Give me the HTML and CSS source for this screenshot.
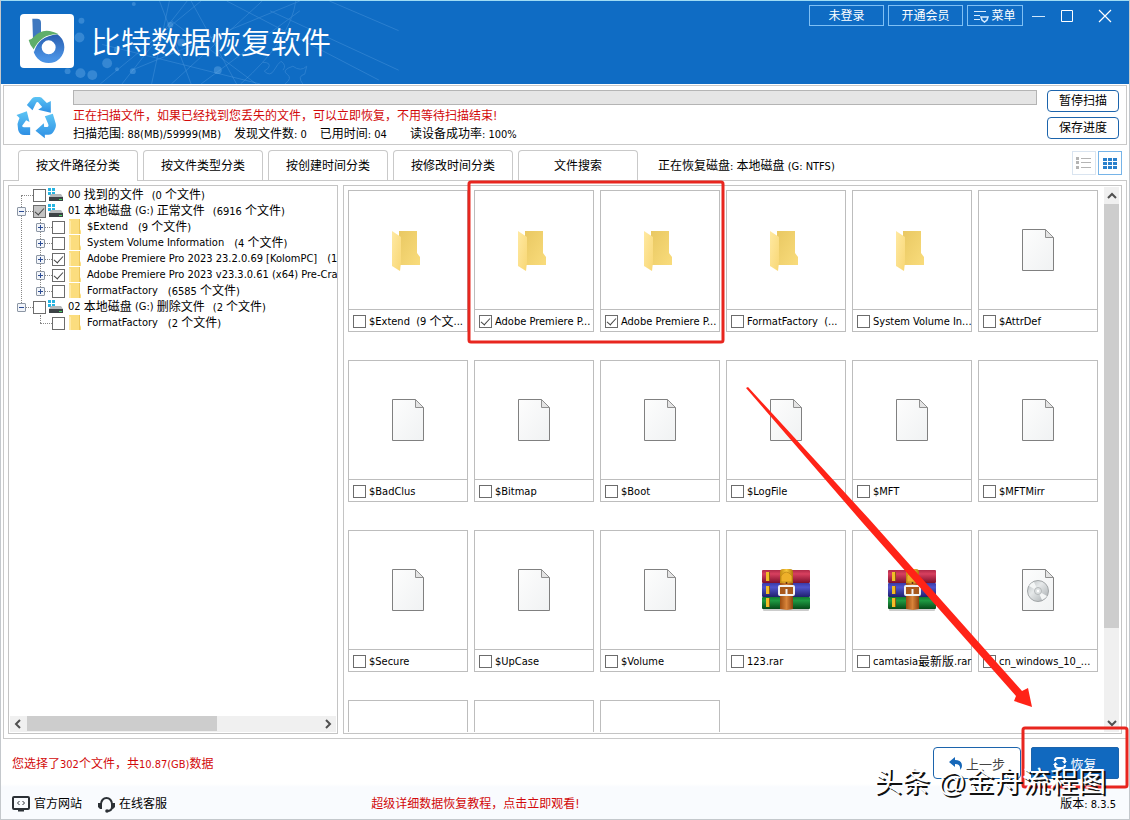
FILE: index.html
```html
<!DOCTYPE html>
<html lang="zh-CN">
<head>
    <meta charset="UTF-8">
    <meta name="viewport" content="width=device-width, initial-scale=1.0">
    <title>比特数据恢复软件</title>
    <link rel="stylesheet" href="styles.css">
</head>
<body>

    <!-- Shared icons -->
    <svg class="icon-defs" aria-hidden="true">
        <defs>
            <linearGradient id="g-back" x1="0" y1="0" x2="1" y2="1"><stop offset="0" stop-color="#e9c862"/><stop offset="1" stop-color="#f9dc7c"/></linearGradient>
            <linearGradient id="g-front" x1="0" y1="0" x2="1" y2="1"><stop offset="0" stop-color="#ffe9a2"/><stop offset="1" stop-color="#f8d775"/></linearGradient>
            <linearGradient id="g-paper" x1="0" y1="0" x2="1" y2="1"><stop offset="0" stop-color="#fdfdfd"/><stop offset="1" stop-color="#f0f2f3"/></linearGradient>
            <linearGradient id="g-red" x1="0" y1="0" x2="0" y2="1"><stop offset="0" stop-color="#b02a48"/><stop offset=".3" stop-color="#d8405f"/><stop offset="1" stop-color="#7e0f2c"/></linearGradient>
            <linearGradient id="g-blue" x1="0" y1="0" x2="0" y2="1"><stop offset="0" stop-color="#3a3aa8"/><stop offset=".3" stop-color="#5054cc"/><stop offset="1" stop-color="#20206e"/></linearGradient>
            <linearGradient id="g-green" x1="0" y1="0" x2="0" y2="1"><stop offset="0" stop-color="#117a30"/><stop offset=".3" stop-color="#1f9a42"/><stop offset="1" stop-color="#064a18"/></linearGradient>
            <linearGradient id="g-belt" x1="0" y1="0" x2="1" y2="0"><stop offset="0" stop-color="#9c4c10"/><stop offset=".5" stop-color="#d8843a"/><stop offset="1" stop-color="#8c420e"/></linearGradient>
            <linearGradient id="g-gold" x1="0" y1="0" x2="1" y2="0"><stop offset="0" stop-color="#c48a10"/><stop offset=".5" stop-color="#f8c83c"/><stop offset="1" stop-color="#b07808"/></linearGradient>
            <linearGradient id="g-disc" x1="0" y1="0" x2="1" y2="1"><stop offset="0" stop-color="#b5babd"/><stop offset=".4" stop-color="#e6e9ea"/><stop offset="1" stop-color="#a4a9ac"/></linearGradient>
            <linearGradient id="g-cycle" x1="0" y1="0" x2="0" y2="1"><stop offset="0" stop-color="#5cc4f4"/><stop offset="1" stop-color="#2e8fe4"/></linearGradient>
            <linearGradient id="g-ring" x1="0" y1="0" x2="0" y2="1"><stop offset="0" stop-color="#2b62b4"/><stop offset="1" stop-color="#4a92e4"/></linearGradient>
        </defs>
        <symbol id="folder" viewBox="0 0 48 48">
            <path d="M15 5h18v22l3 4v8H15z" fill="url(#g-back)"/>
            <path d="M8 5l9 6v25l-1 9-8-5z" fill="url(#g-front)"/>
        </symbol>
        <symbol id="file" viewBox="0 0 48 48">
            <path d="M8.500 3.500h23l8 8v33h-31z" fill="url(#g-paper)" stroke="#808080"/>
            <path d="M31.500 3.500v8h8z" fill="#e4e4e4" stroke="#909090"/>
        </symbol>
        <symbol id="disc" viewBox="0 0 48 48">
            <use href="#file"/>
            <circle cx="24" cy="25" r="10.500" fill="url(#g-disc)" stroke="#a2a6a8"/>
            <path d="M24 25l-9-5a10 10 0 0 1 5-4zM24 25l9 5a10 10 0 0 1-5 4z" fill="#f4f6f6"/>
            <circle cx="24" cy="25" r="3.500" fill="#dfe2e3" stroke="#b4b8ba"/>
            <circle cx="24" cy="25" r="1.200" fill="#fff"/>
        </symbol>
        <symbol id="rar" viewBox="0 0 48 48">
            <rect x="1" y="42" width="46" height="3" rx="1" fill="#ccc"/>
            <rect y="4" width="48" height="13" rx="1" fill="url(#g-red)"/>
            <rect y="17" width="48" height="14" rx="1" fill="url(#g-blue)"/>
            <rect y="31" width="48" height="12" rx="1" fill="url(#g-green)"/>
            <path d="M4 6h3v9H4zM4 20h3v8H4zM4 32h3v9H4z" fill="#f2bd28"/>
            <path d="M7 6h1v9H7zM7 20h1v8H7zM7 32h1v9H7z" fill="#8f5c10"/>
            <path d="M18 17h13v26l-6 1-7-1z" fill="url(#g-belt)"/>
            <path d="M18 17V6q0-3 3-3h7q3 0 3 3v11z" fill="url(#g-gold)"/>
            <path d="M19 10q5-8 11 0v6H19z" fill="#eeb02a" stroke="#b07a10" stroke-width=".6"/>
            <rect x="17" y="20" width="15" height="9" rx="1" fill="#a8581c" stroke="#f1f1f1" stroke-width="2"/>
            <circle cx="24.500" cy="17" r="1" fill="#602c08"/>
            <path d="M24.500 23v5" stroke="#f1f1f1" stroke-width="2"/>
        </symbol>
        <symbol id="drive" viewBox="0 0 15 14">
            <path d="M0 0h3v3H0zM4 0h3v3H4zM0 4h3v3H0zM4 4h3v3H4z" fill="#26b4e2"/>
            <path d="M3 6h10l2 3H1z" fill="#b4b8ba"/>
            <path d="M1 9h14v4H1z" fill="#3c4245"/>
            <path d="M11 11h3v1h-3z" fill="#48d860"/>
        </symbol>
        <symbol id="small-folder" viewBox="0 0 13 16">
            <path d="M0 0h11v10l1 2v3H0z" fill="#fbdd7e"/>
            <path d="M0 1l2 1v13H0z" fill="#ffe9a4"/>
            <path d="M10.500 0v15" stroke="#edc75c" fill="none"/>
        </symbol>
    </svg>

    <!-- Title bar -->
    <header class="title-bar">
        <svg class="title-pattern" viewBox="0 0 400 84" aria-hidden="true">
            <g fill="none" stroke="#5fa4e4" stroke-width="1" opacity=".35">
                <path d="M98 84L200 0M120 84L186 0M150 84L168 0M190 84L158 0M236 84L190 0M256 84L170 20M170 84L262 0M200 84L300 10M130 70L300 0M100 44L260 84M226 0L380 80M330 0L400 30M270 10L400 70M240 84Q290 40 296 0"/>
                <path d="M262 62q10 0 6 6l-4 3q6 6 10-1t7-9q6 4 2 9M285 84q8-6 2-10t6-8q8 6 14 0l-2 8q-8 2-2 10"/>
            </g>
            <g fill="#6eb0ea" opacity=".4">
                <circle cx="79" cy="20" r="3"/><circle cx="77" cy="37" r="5"/><circle cx="105" cy="63" r="5"/><circle cx="78" cy="73" r="5"/><circle cx="90" cy="75" r="5"/><circle cx="65" cy="71" r="3"/><circle cx="115" cy="69" r="2"/><circle cx="131" cy="71" r="3"/><circle cx="132" cy="3" r="2"/><circle cx="169" cy="24" r="3"/><circle cx="180" cy="42" r="4"/><circle cx="217" cy="70" r="4"/><circle cx="115" cy="49" r="3"/>
            </g>
        </svg>
        <svg class="logo" viewBox="60 41 162 162" aria-hidden="true">
            <rect x="60" y="41" width="162" height="162" rx="12" fill="#fff"/>
            <path d="M97 55h14q12 0 12 12v50l-23 30z" fill="#3f78bf"/>
            <circle cx="146" cy="141" r="34" fill="none" stroke="url(#g-ring)" stroke-width="26"/>
            <path d="M100 154Q112 106 172 99" fill="none" stroke="#fff" stroke-width="5"/>
            <path d="M86 119Q94 119 100 111Q130 77 176 102Q126 98 101 147Q90 136 86 119z" fill="#5fae6a"/>
        </svg>
        <h1>比特数据恢复软件</h1>
        <div class="window-tools">
            <button class="title-btn">未登录</button>
            <button class="title-btn">开通会员</button>
            <button class="title-btn menu-btn">
                <svg width="15" height="14" viewBox="0 0 15 14" aria-hidden="true"><path d="M0 2.500h12M0 6.500h6M0 10.500h6" stroke="#d8ecff" fill="none"/><path d="M7 8h7l-1 3-2.500 2-2.500-2z" fill="none" stroke="#d8ecff" stroke-width="1.500"/></svg>菜单</button>
            <button class="win-btn" aria-label="最小化"><svg width="14" height="14"><path d="M0 7.500h13" stroke="#cfe6fb"/></svg></button>
            <button class="win-btn" aria-label="最大化"><svg width="14" height="14"><path d="M1.500 1.500h11v11h-11z" stroke="#fff" fill="none"/></svg></button>
            <button class="win-btn close-btn" aria-label="关闭"><svg width="14" height="14"><path d="M1 1l12 12M13 1L1 13" stroke="#fff" stroke-width="1.200"/></svg></button>
        </div>
    </header>

    <!-- Scan status -->
    <section class="scan-panel">
        <svg class="cycle" viewBox="48 288 122 132" aria-hidden="true">
            <g fill="url(#g-cycle)">
                <path d="M80 315L95 296Q98 291 105 291H118Q124 291 128 297L140 309 152 303V338L114 329 126 321 114 307Q111 304 108 308L97 331z"/>
                <path d="M49 345L80 334 88 366 78 361 66 377Q66 382 72 382H90V405H72Q58 405 54 390L52 372Q54 364 58 354z"/>
                <path d="M134 349L158 341 167 372Q169 382 160 395 155 404 145 404H134V415L106 392 131 370 132 381H141Q147 380 144 372z"/>
            </g>
        </svg>
        <div class="scan-info">
            <div class="progress"></div>
            <p class="scan-note">正在扫描文件，如果已经找到您丢失的文件，可以立即恢复，不用等待扫描结束!</p>
            <p class="scan-stats">
                <span><b>扫描范围</b>: 88(MB)/59999(MB)</span>
                <span><b>发现文件数</b>: 0</span>
                <span><b>已用时间</b>: 04</span>
                <span class="rate"><b>读设备成功率</b>: 100%</span>
            </p>
        </div>
        <div class="scan-buttons">
            <button class="line-btn">暂停扫描</button>
            <button class="line-btn">保存进度</button>
        </div>
    </section>

    <!-- Tabs -->
    <nav class="tabs">
        <button class="tab active">按文件路径分类</button>
        <button class="tab">按文件类型分类</button>
        <button class="tab">按创建时间分类</button>
        <button class="tab">按修改时间分类</button>
        <button class="tab">文件搜索</button>
        <span class="disk"><b>正在恢复磁盘</b>: <b>本地磁盘</b> (G: NTFS)</span>
        <button class="view-btn list-view" aria-label="列表"><svg width="16" height="12"><path d="M0 0h3v3H0zM0 4h3v3H0zM0 9h3v3H0z" fill="#b4b4b4"/><path d="M5 1.500h10M5 5.500h10M5 10.500h10" stroke="#b4b4b4"/></svg></button>
        <button class="view-btn grid-view" aria-label="图标"><svg width="14" height="11"><path d="M0 0h4v3H0zM5 0h4v3H5zM10 0h4v3h-4zM0 4h4v3H0zM5 4h4v3H5zM10 4h4v3h-4zM0 8h4v3H0zM5 8h4v3H5zM10 8h4v3h-4z" fill="#2a80cc"/></svg></button>
    </nav>

    <main class="work-area">
        <!-- Directory tree -->
        <div class="tree-pane">
            <ul class="tree">
                <li>
                    <label class="node leaf"><i class="dots"></i><input type="checkbox"><svg class="drive"><use href="#drive"/></svg>00 <b>找到的文件</b><span class="count">(0 <b>个文件</b>)</span></label>
                </li>
                <li>
                    <label class="node"><i class="toggle"></i><i class="dots"></i><input type="checkbox" class="partial" checked><svg class="drive"><use href="#drive"/></svg>01 <b>本地磁盘</b> (G:) <b>正常文件</b><span class="count">(6916 <b>个文件</b>)</span></label>
                    <ul>
                        <li><label class="node"><i class="toggle plus"></i><i class="dots"></i><input type="checkbox"><svg class="dir"><use href="#small-folder"/></svg>$Extend<span class="count">(9 <b>个文件</b>)</span></label></li>
                        <li><label class="node"><i class="toggle plus"></i><i class="dots"></i><input type="checkbox"><svg class="dir"><use href="#small-folder"/></svg>System Volume Information<span class="count">(4 <b>个文件</b>)</span></label></li>
                        <li><label class="node"><i class="toggle plus"></i><i class="dots"></i><input type="checkbox" checked><svg class="dir"><use href="#small-folder"/></svg>Adobe Premiere Pro 2023 23.2.0.69 [KolomPC]<span class="count">(1</span></label></li>
                        <li><label class="node"><i class="toggle plus"></i><i class="dots"></i><input type="checkbox" checked><svg class="dir"><use href="#small-folder"/></svg>Adobe Premiere Pro 2023 v23.3.0.61 (x64) Pre-Cra</label></li>
                        <li><label class="node"><i class="toggle plus"></i><i class="dots"></i><input type="checkbox"><svg class="dir"><use href="#small-folder"/></svg>FormatFactory<span class="count">(6585 <b>个文件</b>)</span></label></li>
                    </ul>
                </li>
                <li>
                    <label class="node"><i class="toggle"></i><i class="dots"></i><input type="checkbox"><svg class="drive"><use href="#drive"/></svg>02 <b>本地磁盘</b> (G:) <b>删除文件</b><span class="count">(2 <b>个文件</b>)</span></label>
                    <ul>
                        <li><label class="node leaf"><i class="dots"></i><input type="checkbox"><svg class="dir"><use href="#small-folder"/></svg>FormatFactory<span class="count">(2 <b>个文件</b>)</span></label></li>
                    </ul>
                </li>
            </ul>
            <div class="h-scroll">
                <svg width="17" height="16"><path d="M10 4L6 8l4 4" fill="none" stroke="#505050" stroke-width="2"/></svg>
                <div class="h-track"><div class="h-thumb"></div></div>
                <svg width="17" height="16"><path d="M7 4l4 4-4 4" fill="none" stroke="#505050" stroke-width="2"/></svg>
            </div>
        </div>

        <!-- Thumbnails -->
        <div class="list-pane">
            <div class="file-grid">
                <div class="card"><div class="thumb"><svg><use href="#folder"/></svg></div><label><input type="checkbox">$Extend&nbsp; (9 <b>个文</b>...</label></div>
                <div class="card"><div class="thumb"><svg><use href="#folder"/></svg></div><label><input type="checkbox" checked>Adobe Premiere P...</label></div>
                <div class="card"><div class="thumb"><svg><use href="#folder"/></svg></div><label><input type="checkbox" checked>Adobe Premiere P...</label></div>
                <div class="card"><div class="thumb"><svg><use href="#folder"/></svg></div><label><input type="checkbox">FormatFactory&nbsp; (...</label></div>
                <div class="card"><div class="thumb"><svg><use href="#folder"/></svg></div><label><input type="checkbox">System Volume In...</label></div>
                <div class="card"><div class="thumb"><svg><use href="#file"/></svg></div><label><input type="checkbox">$AttrDef</label></div>
                <div class="card"><div class="thumb"><svg><use href="#file"/></svg></div><label><input type="checkbox">$BadClus</label></div>
                <div class="card"><div class="thumb"><svg><use href="#file"/></svg></div><label><input type="checkbox">$Bitmap</label></div>
                <div class="card"><div class="thumb"><svg><use href="#file"/></svg></div><label><input type="checkbox">$Boot</label></div>
                <div class="card"><div class="thumb"><svg><use href="#file"/></svg></div><label><input type="checkbox">$LogFile</label></div>
                <div class="card"><div class="thumb"><svg><use href="#file"/></svg></div><label><input type="checkbox">$MFT</label></div>
                <div class="card"><div class="thumb"><svg><use href="#file"/></svg></div><label><input type="checkbox">$MFTMirr</label></div>
                <div class="card"><div class="thumb"><svg><use href="#file"/></svg></div><label><input type="checkbox">$Secure</label></div>
                <div class="card"><div class="thumb"><svg><use href="#file"/></svg></div><label><input type="checkbox">$UpCase</label></div>
                <div class="card"><div class="thumb"><svg><use href="#file"/></svg></div><label><input type="checkbox">$Volume</label></div>
                <div class="card"><div class="thumb"><svg><use href="#rar"/></svg></div><label><input type="checkbox">123.rar</label></div>
                <div class="card"><div class="thumb"><svg><use href="#rar"/></svg></div><label><input type="checkbox">camtasia<b>最新版</b>.rar</label></div>
                <div class="card"><div class="thumb"><svg><use href="#disc"/></svg></div><label><input type="checkbox">cn_windows_10_...</label></div>
                <div class="card"><div class="thumb"></div></div>
                <div class="card"><div class="thumb"></div></div>
                <div class="card"><div class="thumb"></div></div>
            </div>
            <div class="v-scroll">
                <svg width="15" height="17"><path d="M4 11l4-4 4 4" fill="none" stroke="#505050" stroke-width="2"/></svg>
                <div class="v-track"><div class="v-thumb"></div></div>
                <svg width="15" height="17"><path d="M4 6l4 4 4-4" fill="none" stroke="#505050" stroke-width="2"/></svg>
            </div>
        </div>
    </main>

    <!-- Footer -->
    <footer class="footer">
        <div class="action-row">
            <p class="selected"><b>您选择了</b>302<b>个文件，共</b>10.87(GB)<b>数据</b></p>
            <button class="back-btn"><svg width="14" height="13" viewBox="0 0 14 13"><path d="M6 0v3q7 0 7 6 0 2-2 4 1-6-5-6v3L0 5z" fill="#1667b8"/></svg>上一步</button>
            <button class="recover-btn"><svg width="14" height="14" viewBox="0 0 14 14"><path d="M2 5q0-3 3-3h4q3 0 3 3M12 9q0 3-3 3H5q-3 0-3-3" fill="none" stroke="#fff" stroke-width="2"/><path d="M9 5h5l-2.500 3zM0 9h5L2.500 6z" fill="#fff"/></svg>恢复</button>
        </div>
        <div class="link-row">
            <a href="#"><svg width="18" height="16" viewBox="0 0 18 16"><rect x="1" y="1" width="16" height="12" rx="1" fill="none" stroke="#2c3136" stroke-width="2"/><path d="M7.500 5L5.500 7l2 2M10.500 5l2 2-2 2" fill="none" stroke="#2c3136"/><path d="M6 13h6v2.500H6z" fill="#2c3136"/></svg>官方网站</a>
            <a href="#"><svg width="17" height="17" viewBox="0 0 17 17"><path d="M3 11V8a5.500 6 0 0 1 11 0v3q0 4-5 4" fill="none" stroke="#2c3136" stroke-width="2"/><path d="M0 7h4v6H2L0 11zM17 7h-4v6h2l2-2z" fill="#2c3136"/><circle cx="9" cy="15" r="1.800" fill="#2c3136"/></svg>在线客服</a>
            <a href="#" class="guide">超级详细数据恢复教程，点击立即观看!</a>
            <span class="version"><b>版本</b>: 8.3.5</span>
        </div>
    </footer>

    <!-- Guide marks over the window -->
    <svg class="marks" width="1130" height="820" aria-hidden="true">
        <rect x="469" y="182" width="254" height="160" rx="2" fill="none" stroke="#e8261f" stroke-width="3"/>
        <rect x="1023" y="728" width="104" height="59" rx="2" fill="none" stroke="#e8261f" stroke-width="3"/>
        <path d="M746 388L748 387 870 520 1022 691 1028 688 1032 707 1014 701 1016 696 862 522z" fill="#ff2317"/>
    </svg>
    <div class="watermark">头条 @金舟流程图</div>

</body>
</html>
```
FILE: styles.css
```css
/* General Styles */
* {
    box-sizing: border-box;
}

body {
    position: relative;
    margin: 0;
    height: 100vh;
    display: flex;
    flex-direction: column;
    font-family: "DejaVu Sans Condensed", "Noto Sans CJK SC", sans-serif;
    font-size: 11px;
    line-height: 16px;
    color: #000;
    background: #fff;
    border: 1px solid #c4c8cc;
    border-top: 0;
    overflow: hidden;
}

p, h1, ul {
    margin: 0;
    padding: 0;
}

b {
    font-size: 12px;
    font-weight: normal;
}

button {
    padding: 0;
    font-family: inherit;
    font-size: 12px;
    color: #000;
    background: #fff;
}

a {
    color: #000;
    text-decoration: none;
}

input[type="checkbox"] {
    appearance: none;
    flex: none;
    width: 13px;
    height: 13px;
    margin: 0;
    border: 1px solid #6c6c6c;
    background: #fff;
}

input[type="checkbox"]:checked::before {
    content: "";
    display: block;
    width: 8px;
    height: 4px;
    margin: 2px 1px;
    border-left: 1px solid #444;
    border-bottom: 1px solid #444;
    transform: rotate(-48deg);
}

input[type="checkbox"].partial {
    background: #c4c4c4;
}

.icon-defs {
    position: absolute;
    width: 0;
    height: 0;
}

/* Title Bar */
.title-bar {
    position: relative;
    flex: none;
    height: 84px;
    display: flex;
    align-items: flex-start;
    padding: 0 12px 0 19px;
    background: #0f6cc4;
    border-top: 1px solid #9fdcf4;
}

.title-pattern {
    position: absolute;
    left: 0;
    top: 0;
    width: 400px;
    height: 83px;
}

.logo {
    position: relative;
    width: 54px;
    height: 54px;
    margin-top: 13px;
}

.title-bar h1 {
    position: relative;
    margin: 18px 0 0 17px;
    font-size: 30px;
    font-weight: 350;
    line-height: 48px;
    color: #fff;
}

.window-tools {
    display: flex;
    align-items: center;
    gap: 4px;
    margin: 4px 0 0 auto;
}

.title-btn {
    width: 75px;
    height: 21px;
    line-height: 18px;
    border: 1px solid #7fc0f4;
    background: none;
    color: #fff;
}

.menu-btn {
    display: flex;
    align-items: center;
    justify-content: center;
    gap: 2px;
    width: 56px;
}

.win-btn {
    width: 24px;
    height: 20px;
    padding: 0 0 0 5px;
    border: 0;
    background: none;
}

.win-btn svg {
    display: block;
}

.close-btn {
    margin-left: 10px;
}

/* Scan Panel */
.scan-panel {
    flex: none;
    display: flex;
    height: 60px;
    margin: 1px 2px 0;
    padding: 4px 7px 0 12px;
    border: 1px solid #c9c9c9;
}

.cycle {
    width: 41px;
    height: 44px;
    margin-top: 6px;
}

.scan-info {
    flex: 1;
    margin: 0 10px 0 16px;
}

.progress {
    height: 15px;
    margin-bottom: 2px;
    border: 1px solid #b4b4b4;
    background: #e5e5e5;
}

.scan-note {
    font-size: 12px;
    color: #d20a0a;
    line-height: 18px;
}

.scan-stats {
    display: flex;
    gap: 13px;
    line-height: 18px;
}

.scan-stats .rate {
    margin-left: 10px;
}

.scan-buttons {
    display: flex;
    flex-direction: column;
    gap: 5px;
}

.line-btn {
    width: 72px;
    height: 22px;
    line-height: 18px;
    border: 1px solid #1c64ac;
    border-radius: 4px;
}

/* Tabs */
.tabs {
    flex: none;
    display: flex;
    gap: 5px;
    height: 35px;
    padding: 5px 7px 0 17px;
}

.tab {
    width: 120px;
    height: 30px;
    padding-bottom: 3px;
    border: 1px solid #c9c9c9;
    border-bottom: 0;
    border-radius: 4px 4px 0 0;
}

.tab.active {
    position: relative;
    z-index: 1;
    height: 31px;
    padding-bottom: 4px;
}

.disk {
    margin: 8px auto 0 15px;
    white-space: nowrap;
}

.view-btn {
    display: flex;
    align-items: center;
    justify-content: center;
    width: 24px;
    height: 24px;
    margin-top: 1px;
}

.list-view {
    border: 1px solid #d9e4f0;
}

.grid-view {
    border: 1px solid #76b4e8;
    margin-left: -3px;
}

/* Work Area */
.work-area {
    flex: 1;
    min-height: 0;
    display: flex;
    gap: 5px;
    margin: 0 2px;
    padding: 4px;
    border: 1px solid #c9c9c9;
}

.tree-pane {
    flex: none;
    width: 30%;
    max-width: 330px;
    display: flex;
    flex-direction: column;
    justify-content: space-between;
    padding: 1px;
    border: 1px solid #c4c4c4;
    overflow: hidden;
}

.tree, .tree ul {
    position: relative;
    list-style: none;
}

.tree {
    padding-left: 7px;
}

.tree ul {
    padding-left: 19px;
}

/* vertical guide lines */
.tree::before, .tree ul::before {
    content: "";
    position: absolute;
    left: 11px;
    top: 8px;
    bottom: 24px;
    border-left: 1px dotted #888;
}

.tree ul::before {
    left: 23px;
    top: 0;
    bottom: 8px;
}

.node {
    position: relative;
    display: flex;
    align-items: center;
    height: 16px;
    white-space: pre;
}

.node i, .node svg {
    flex: none;
}

/* minus and plus are drawn as bars */
.toggle {
    width: 9px;
    height: 9px;
    border: 1px solid #8c96a4;
    border-radius: 1px;
    background: linear-gradient(#2c4c94, #2c4c94) center / 5px 1px no-repeat, #f2f5fa;
}

.toggle.plus {
    background: linear-gradient(#2c4c94, #2c4c94) center / 5px 1px no-repeat, linear-gradient(#2c4c94, #2c4c94) center / 1px 5px no-repeat, #f2f5fa;
}

.dots {
    width: 7px;
    border-top: 1px dotted #888;
}

.leaf .dots {
    width: 12px;
    margin-left: 4px;
}

.drive {
    width: 15px;
    height: 14px;
    margin: 0 5px 0 2px;
}

.dir {
    width: 13px;
    height: 16px;
    margin: 0 5px 0 4px;
}

.count {
    margin-left: 8px;
}

.tree ul .count {
    margin-left: 10px;
}

.h-scroll {
    display: flex;
    background: #f0f0f0;
    height: 16px;
}

.h-scroll svg, .v-scroll svg {
    flex: none;
}

.h-track {
    flex: 1;
}

.h-thumb {
    width: 65%;
    height: 15px;
    background: #cdcdcd;
}

/* File List */
.list-pane {
    flex: 1;
    min-width: 0;
    display: flex;
    justify-content: space-between;
    padding: 1px 2px 1px 1px;
    border: 1px solid #c4c4c4;
}

.file-grid {
    flex: 1;
    display: grid;
    grid-template-columns: repeat(auto-fill, 120px);
    align-content: start;
    gap: 28px 6px;
    padding: 3px 0 0 3px;
    overflow: hidden;
}

.card {
    height: 142px;
    border: 1px solid #bdbdbd;
}

.thumb {
    display: flex;
    align-items: center;
    justify-content: center;
    height: 119px;
    border-bottom: 1px solid #bdbdbd;
}

.thumb svg {
    width: 48px;
    height: 48px;
}

.card label {
    display: flex;
    align-items: center;
    height: 21px;
    padding: 2px 0 0 4px;
    white-space: pre;
}

.card input {
    margin-right: 3px;
}

.v-scroll {
    display: flex;
    flex-direction: column;
    width: 15px;
    background: #f0f0f0;
}

.v-track {
    flex: 1;
}

.v-thumb {
    height: 83%;
    background: #cdcdcd;
}

/* Footer */
.footer {
    flex: none;
    padding: 8px 10px 0 11px;
    height: 80px;
    background: linear-gradient(#fff 45px, #f9fbfe 48px);
}

.action-row {
    display: flex;
    gap: 10px;
    height: 44px;
}

.selected {
    margin: 9px auto 0 0;
    color: #d20a0a;
}

.back-btn, .recover-btn {
    display: flex;
    align-items: center;
    justify-content: center;
    gap: 3px;
    width: 88px;
    height: 32px;
    font-size: 13px;
    border: 1px solid #1c64ac;
    border-radius: 4px;
    color: #444;
}

.recover-btn {
    border-radius: 2px;
    background: #1169bf;
    color: #fff;
}

.link-row {
    display: flex;
    align-items: center;
    gap: 16px;
    height: 26px;
    font-size: 12px;
}

.link-row a {
    display: flex;
    align-items: center;
    gap: 4px;
}

.link-row .guide {
    margin-left: 17%;
    color: #d20a0a;
}

.version {
    margin-left: auto;
    padding-right: 3px;
    font-size: 11px;
}

/* Marks drawn over the window */
.marks {
    position: absolute;
    left: -1px;
    top: 0;
    pointer-events: none;
}

.watermark {
    position: absolute;
    right: 23px;
    bottom: 16px;
    font-family: "Liberation Sans", "Noto Sans CJK SC", sans-serif;
    font-size: 28px;
    line-height: 40px;
    color: #fff;
    text-shadow: 2px 2px 0 #111;
    pointer-events: none;
}
```
